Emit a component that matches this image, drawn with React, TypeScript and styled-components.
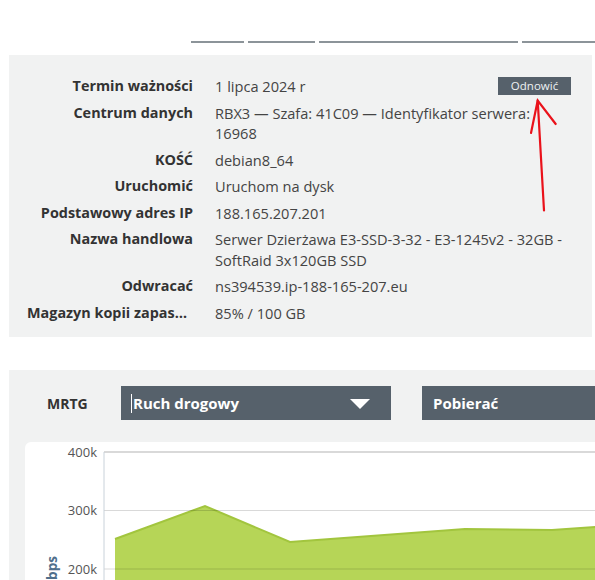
import React from 'react';
import styled, { createGlobalStyle } from 'styled-components';

const GlobalStyle = createGlobalStyle`
	html,
	body {
		margin: 0;
		padding: 0;
		overflow: hidden;
		background: #fff;
		font-family: 'Open Sans', 'Liberation Sans', sans-serif;
	}
`;

const Page = styled.main`
	width: 595px;
	padding-top: 41px;
`;

const TabBar = styled.nav`
	display: flex;
	gap: 4px;
	margin-left: 191px;
	height: 2px;
	margin-bottom: 12px;
`;

const Tab = styled.div<{ $w: number }>`
	flex: 0 0 ${(p) => p.$w}px;
	height: 2px;
	background: #8c9499;
`;

const Panel = styled.section`
	position: relative;
	margin-left: 9px;
	width: 583px;
	box-sizing: border-box;
	background: #f1f2f2;
`;

const InfoGrid = styled.dl`
	display: grid;
	grid-template-columns: 166px 1fr;
	column-gap: 22px;
	row-gap: 6px;
	margin: 0;
	padding: 21px 21px 14px 18px;
	font-size: 14.6px;
	line-height: 20.5px;
`;

const Label = styled.dt`
	text-align: right;
	font-size: 14.4px;
	font-weight: 700;
	color: #333;
	white-space: nowrap;
	overflow: hidden;
	text-overflow: ellipsis;
`;

const Value = styled.dd`
	margin: 0;
	color: #444;
	display: flex;
	justify-content: space-between;
	align-items: center;
`;

const RenewButton = styled.button`
	width: 73px;
	height: 18px;
	padding: 0;
	border: 0;
	background: #56616b;
	color: #eef1f3;
	font-family: inherit;
	font-size: 11.5px;
	line-height: 18px;
	cursor: pointer;
`;

const Arrow = styled.svg`
	position: absolute;
	left: 515px;
	top: 40px;
	overflow: visible;
`;

const ChartPanel = styled(Panel)`
	width: 720px;
	margin-top: 33px;
	padding: 16px 0 0 16px;
`;

const Toolbar = styled.div`
	display: flex;
	align-items: center;
	margin-bottom: 22px;
`;

const ToolbarLabel = styled.span`
	flex: 0 0 74px;
	padding-left: 22px;
	font-size: 14px;
	font-weight: 700;
	color: #333;
`;

const Select = styled.div<{ $gap?: number }>`
	position: relative;
	display: flex;
	align-items: center;
	flex: 0 0 270px;
	height: 34px;
	margin-right: ${(p) => p.$gap ?? 0}px;
	padding-left: ${(p) => (p.$gap ? 10 : 11)}px;
	box-sizing: border-box;
	background: #56616b;
	color: #fff;
	font-size: 15px;
	font-weight: 700;
`;

const Caret = styled.span`
	display: inline-block;
	width: 1px;
	height: 19px;
	margin-right: 1px;
	background: #fff;
`;

const Triangle = styled.span`
	position: absolute;
	right: 21px;
	top: 13px;
	width: 0;
	height: 0;
	border-left: 10px solid transparent;
	border-right: 10px solid transparent;
	border-top: 10px solid #fff;
`;

const ChartCard = styled.div`
	background: #fff;
	border-radius: 6px 0 0 0;
	height: 200px;
	overflow: hidden;
`;

const rows: [string, string][] = [
	['Centrum danych', 'RBX3 — Szafa: 41C09 — Identyfikator serwera: 16968'],
	['KOŚĆ', 'debian8_64'],
	['Uruchomić', 'Uruchom na dysk'],
	['Podstawowy adres IP', '188.165.207.201'],
	['Nazwa handlowa', 'Serwer Dzierżawa E3-SSD-3-32 - E3-1245v2 - 32GB - SoftRaid 3x120GB SSD'],
	['Odwracać', 'ns394539.ip-188-165-207.eu'],
	['Magazyn kopii zapasowej', '85% / 100 GB'],
];

// traffic samples, in chart pixels
const points: [number, number][] = [
	[90, 97],
	[180, 64],
	[265, 100],
	[440, 87],
	[527, 88],
	[570, 85],
	[700, 83],
];

function TrafficChart() {
	const line = points.map(([x, y]) => `${x},${y}`).join(' ');
	const area = `90,200 ${line} 700,200`;
	const grid = [
		{ y: 10, label: '400k' },
		{ y: 68.5, label: '300k' },
		{ y: 127, label: '200k' },
	];
	return (
		<svg width="700" height="200">
			<polygon points={area} fill="#b6d557" />
			<polyline points={line} fill="none" stroke="#a2c53e" strokeWidth="2" />
			{grid.map((g, i) => (
				<g key={g.label}>
					<line
						x1="79"
						x2="700"
						y1={g.y}
						y2={g.y}
						stroke="rgba(0,0,0,0.15)"
						strokeWidth={i === 0 ? 2 : 1.2}
					/>
					<text
						x="72"
						y={g.y + 4.5}
						textAnchor="end"
						fontSize="13"
						fill="#555"
						fontFamily="Open Sans, sans-serif"
					>
						{g.label}
					</text>
				</g>
			))}
			<line x1="79" x2="79" y1="10" y2="200" stroke="#c9d2da" strokeWidth="1" />
			<text
				x="0"
				y="0"
				transform="translate(32 126) rotate(-90)"
				textAnchor="middle"
				fontSize="13.5"
				fontWeight="700"
				fill="#4f6f8c"
				fontFamily="Open Sans, sans-serif"
			>
				bps
			</text>
		</svg>
	);
}

export default function App() {
	return (
		<>
			<GlobalStyle />
			<Page>
				<TabBar>
					<Tab $w={53} />
					<Tab $w={67} />
					<Tab $w={199} />
					<Tab $w={80} />
				</TabBar>
				<Panel>
					<InfoGrid>
						<Label>Termin ważności</Label>
						<Value>
							<span>1 lipca 2024 r</span>
							<RenewButton>Odnowić</RenewButton>
						</Value>
						{rows.map(([label, value]) => (
							<React.Fragment key={label}>
								<Label>{label}</Label>
								<Value>{value}</Value>
							</React.Fragment>
						))}
					</InfoGrid>
					{/* red pointer to the renew button */}
					<Arrow width="40" height="120" viewBox="515 40 40 120">
						<g stroke="#ea121b" strokeWidth="2.2" fill="none" strokeLinecap="round">
							<path d="M535 155.5 L528.7 45.5" />
							<path d="M522 78 L528.7 45.5 L546.7 69" />
						</g>
					</Arrow>
				</Panel>
				<ChartPanel>
					<Toolbar>
						<ToolbarLabel>MRTG</ToolbarLabel>
						<Select $gap={31}>
							<Caret />
							Ruch drogowy
							<Triangle />
						</Select>
						<Select>Pobierać</Select>
					</Toolbar>
					<ChartCard>
						<TrafficChart />
					</ChartCard>
				</ChartPanel>
			</Page>
		</>
	);
}
